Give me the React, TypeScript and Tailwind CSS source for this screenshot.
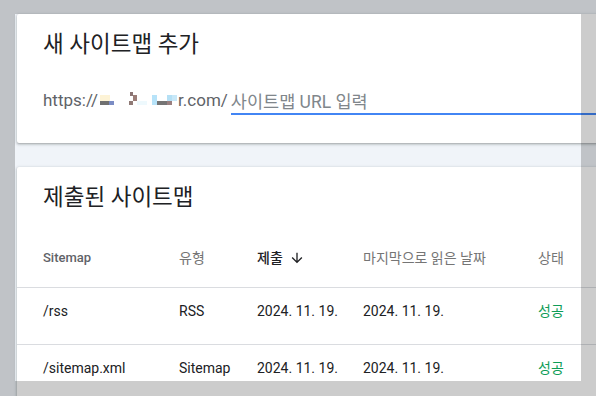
import React from "react";

const font = "font-['Roboto','Noto_Sans_CJK_KR',sans-serif]";

function Blur() {
  const blocks: [number, number, number, number, string][] = [
    [2, 7, 10, 6, "#fdf3d6"],
    [2, 13, 9, 4, "#707070"],
    [11, 13, 5, 4, "#7b8cc4"],
    [32, 4, 3, 4, "#8b7575"],
    [35, 7, 4, 6, "#9b7d78"],
    [31, 13, 4, 4, "#8f7a76"],
    [39, 13, 10, 4, "#eef9fd"],
    [54, 7, 5, 10, "#b7e3f9"],
    [59, 13, 10, 4, "#757575"],
    [69, 7, 5, 6, "#b5e0f5"],
    [69, 13, 5, 4, "#9a8080"],
    [74, 7, 5, 6, "#c8e8f8"],
  ];
  return (
    <svg width="80" height="24" viewBox="0 0 80 24" className="block shrink-0">
      {blocks.map(([x, y, w, h, c], i) => (
        <rect key={i} x={x} y={y} width={w} height={h} fill={c} />
      ))}
    </svg>
  );
}

function ArrowDown() {
  return (
    <svg width="16" height="16" viewBox="0 0 24 24" className="block shrink-0">
      <path
        fill="#202124"
        d="M20 12l-1.41-1.41L13 16.17V4h-2v12.17l-5.58-5.59L4 12l8 8 8-8z"
      />
    </svg>
  );
}

const rows = [
  { path: "/rss", type: "RSS", sub: "2024. 11. 19.", read: "2024. 11. 19.", st: "성공" },
  { path: "/sitemap.xml", type: "Sitemap", sub: "2024. 11. 19.", read: "2024. 11. 19.", st: "성공" },
];

export default function App() {
  return (
    <div className={`relative w-[596px] h-[396px] overflow-hidden bg-[#f0f4f9] ${font}`}>
      <div className="flex flex-col gap-[24px] pl-[17px] pt-[14px] w-[700px]">
        {/* Card 1 */}
        <div className="h-[129px] bg-white rounded-[2px] shadow-[0_1px_2px_rgba(60,64,67,0.3),0_1px_3px_1px_rgba(60,64,67,0.15)] pt-[15px] pl-[26px]">
          <div className="text-[22.5px] leading-[30px] text-[#202124]">새 사이트맵 추가</div>
          <div className="flex items-end mt-[29px]">
            <div className="flex items-start text-[17px] leading-[24px] text-[#5f6368] pb-[3px]">
              <span>https://</span>
              <Blur />
              <span>r.com/</span>
            </div>
            <input
              className={`ml-[3px] flex-1 h-[27px] pt-[3px] border-b-2 border-[#4285f4] outline-none text-[17.5px] leading-[22px] text-[#202124] placeholder:text-[#80868b] ${font}`}
              placeholder="사이트맵 URL 입력"
            />
          </div>
        </div>

        {/* Card 2 */}
        <div className="h-[300px] bg-white rounded-[2px] shadow-[0_1px_2px_rgba(60,64,67,0.3),0_1px_3px_1px_rgba(60,64,67,0.15)] pt-[15px]">
          <div className="pl-[26px] text-[22.5px] leading-[30px] text-[#202124]">제출된 사이트맵</div>
          <div className="mt-[36px] flex pl-[26px] pb-[19px] border-b border-[#dadce0] text-[13px] leading-[20px]">
            <div className="w-[136px] font-medium text-[#5f6368]">Sitemap</div>
            <div className="w-[78px] text-[14px] text-[#757575]">유형</div>
            <div className="w-[106px] flex items-center gap-[6px] text-[14px] font-medium text-[#202124]">
              <span>제출</span>
              <ArrowDown />
            </div>
            <div className="w-[175px] text-[14px] text-[#757575]">마지막으로 읽은 날짜</div>
            <div className="text-[14px] text-[#757575]">상태</div>
          </div>
          {rows.map((r) => (
            <div
              key={r.path}
              className="flex pl-[26px] pt-[13px] pb-[23px] border-b border-[#dadce0] text-[14px] leading-[20px] text-[#202124]"
            >
              <div className="w-[136px]">{r.path}</div>
              <div className="w-[78px]">{r.type}</div>
              <div className="w-[106px]">{r.sub}</div>
              <div className="w-[175px]">{r.read}</div>
              <div className="text-[14px] text-[#0f9d58]">{r.st}</div>
            </div>
          ))}
        </div>
      </div>

      {/* spotlight overlay */}
      <div className="pointer-events-none absolute left-[15px] top-[14px] w-[566px] h-[367px] shadow-[0_0_0_2000px_rgba(0,0,0,0.2)]" />
    </div>
  );
}
